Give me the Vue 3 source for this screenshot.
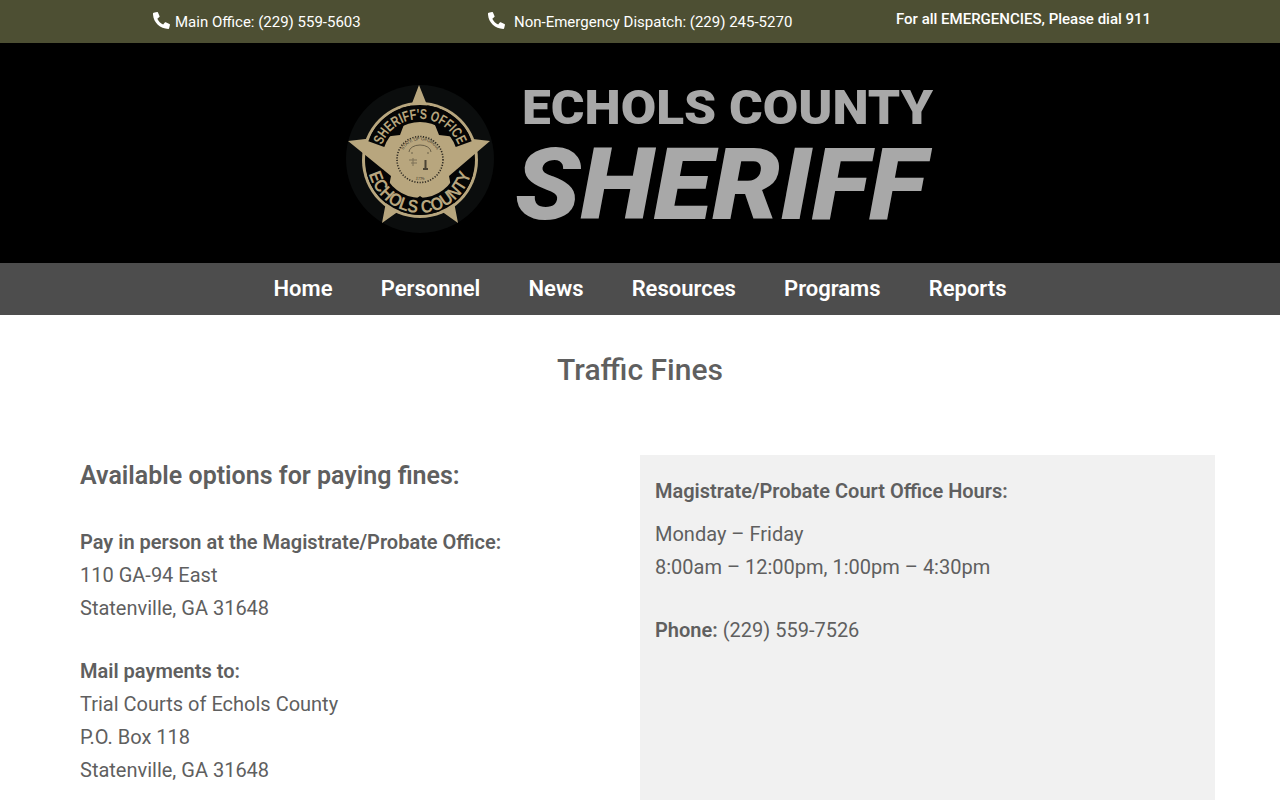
<template>
  <div class="page">
    <div class="topbar">
      <div class="top-item main">
        <svg class="phone" viewBox="0 0 512 512"><path d="M493 24 389 0c-11-3-23 3-27 14l-48 112c-4 10-1 21 7 28l61 50c-36 76-98 139-176 176l-50-61c-7-8-18-11-28-7L16 360C5 365-1 377 2 388l24 104c2 11 12 19 23 19 256 0 464-207 464-464 0-11-8-21-20-23z" transform="matrix(-1 0 0 1 512 0)"/></svg>
        <span>Main Office: (229) 559-5603</span>
      </div>
      <div class="top-item dispatch">
        <svg class="phone" viewBox="0 0 512 512"><path d="M493 24 389 0c-11-3-23 3-27 14l-48 112c-4 10-1 21 7 28l61 50c-36 76-98 139-176 176l-50-61c-7-8-18-11-28-7L16 360C5 365-1 377 2 388l24 104c2 11 12 19 23 19 256 0 464-207 464-464 0-11-8-21-20-23z" transform="matrix(-1 0 0 1 512 0)"/></svg>
        <span>Non-Emergency Dispatch: (229) 245-5270</span>
      </div>
      <div class="top-item emergency">For all EMERGENCIES, Please dial 911</div>
    </div>

    <header class="brand">
      <svg class="logo" viewBox="340 70 600 165" width="600" height="165">
        <defs>
          <path id="arcTop" d="M 379 160 A 41 41 0 0 1 461 160" />
          <path id="arcBottom" d="M 367 160 A 53 53 0 0 0 473 160" />
          <path id="arcSeal" d="M 401 159 A 19 19 0 0 1 439 159" />
          <path id="arcSealLow" d="M 399 159 A 21 21 0 0 0 441 159" />
        </defs>
        <circle cx="420" cy="159" r="74" fill="#0b0d0d" />
        <circle cx="420" cy="160" r="58" fill="#b8a67e" />
        <circle cx="420" cy="160" r="55" fill="#050505" />
        <polygon fill="#b8a67e" points="419,85 439,135 490,141 449,176 458,223 420,196 382,223 391,176 348,141 400,135" />
        <path d="M376.3 144.1A46.5 46.5 0 0 1 463.7 144.1" fill="none" stroke="#050505" stroke-width="17" />
        <path d="M375.1 172A46.5 46.5 0 0 0 464.9 172" fill="none" stroke="#050505" stroke-width="17" />
        <text class="badge-text narrow" font-size="14.5">
          <textPath href="#arcTop" startOffset="50%" text-anchor="middle" textLength="98" lengthAdjust="spacingAndGlyphs">SHERIFF'S OFFICE</textPath>
        </text>
        <text class="badge-text" font-size="18">
          <textPath href="#arcBottom" startOffset="50%" text-anchor="middle" textLength="138" lengthAdjust="spacingAndGlyphs">ECHOLS COUNTY</textPath>
        </text>
        <!-- state seal -->
        <circle cx="420" cy="159.5" r="23" fill="#b8a67e" stroke="#2c2820" stroke-width="1.6" stroke-dasharray="1.2 1.5" />
        <text class="seal-text" font-size="4.2">
          <textPath href="#arcSeal" startOffset="50%" text-anchor="middle">STATE OF GEORGIA</textPath>
        </text>
        <text class="seal-text" font-size="4.2">
          <textPath href="#arcSealLow" startOffset="50%" text-anchor="middle">1776</textPath>
        </text>
        <path d="M409 152a11 7 0 0 1 22 0M412 152v2M428 152v2" fill="none" stroke="#6b6048" stroke-width="1" />
        <path d="M409 160h8M411 163h6M413 158v8" fill="none" stroke="#7d7157" stroke-width="1" />
        <path d="M424.5 160h2v8h1.5v2h-5v-2h1.500z" fill="#4a4334" />
        <text class="county" x="522" y="124" font-size="48" textLength="411" lengthAdjust="spacingAndGlyphs">ECHOLS COUNTY</text>
        <text class="sheriff" x="515" y="219" font-size="100" textLength="411" lengthAdjust="spacingAndGlyphs">SHERIFF</text>
      </svg>
    </header>

    <nav class="nav">
      <a v-for="item in navItems" :key="item">{{ item }}</a>
    </nav>

    <main class="content">
      <h1>Traffic Fines</h1>
      <div class="columns">
        <section class="left">
          <h2>Available options for paying fines:</h2>
          <p>
            <strong>Pay in person at the Magistrate/Probate Office:</strong><br />
            110 GA-94 East<br />
            Statenville, GA 31648
          </p>
          <p>
            <strong>Mail payments to:</strong><br />
            Trial Courts of Echols County<br />
            P.O. Box 118<br />
            Statenville, GA 31648
          </p>
        </section>
        <aside class="hours">
          <h3>Magistrate/Probate Court Office Hours:</h3>
          <p>Monday – Friday<br />8:00am – 12:00pm, 1:00pm – 4:30pm</p>
          <p><strong>Phone:</strong> (229) 559-7526</p>
        </aside>
      </div>
    </main>
  </div>
</template>

<script setup>
const navItems = ['Home', 'Personnel', 'News', 'Resources', 'Programs', 'Reports'];
</script>

<style>
html,
body {
  height: 100%;
  overflow: hidden;
  background: #fff;
}
</style>

<style scoped>
.page {
  font-family: Roboto, "Liberation Sans", sans-serif;
  color: #5f5f5f;
}

.topbar {
  height: 43px;
  background: #4d4f33;
  color: #fff;
  font-size: 15px;
  display: flex;
}

.top-item {
  display: flex;
  align-items: center;
  white-space: nowrap;
}

.main {
  margin-left: 153px;
  width: 335px;
  gap: 5px;
}

.dispatch {
  width: 408px;
  gap: 9px;
}

.emergency {
  font-weight: 500;
  padding-bottom: 6px;
}

.phone {
  width: 17px;
  height: 17px;
  fill: #fff;
  margin-top: -3px;
}

.brand {
  height: 220px;
  background: #000;
  display: flex;
  justify-content: center;
  align-items: flex-start;
  padding-top: 27px;
  box-sizing: border-box;
}

.logo {
  display: block;
  overflow: visible;
}

.badge-text {
  font-family: "Liberation Sans", sans-serif;
  font-weight: 700;
  fill: #b8a67e;
}

.narrow {
  font-family: "Liberation Sans Narrow", "Liberation Sans", sans-serif;
}

.seal-text {
  font-family: "Liberation Sans", sans-serif;
  fill: #3a3428;
}

.county {
  font-family: Roboto, sans-serif;
  font-weight: 900;
  fill: #a8a8a8;
}

.sheriff {
  font-family: Roboto, sans-serif;
  font-weight: 900;
  font-style: italic;
  fill: #a8a8a8;
}

.nav {
  height: 52px;
  background: #4d4d4d;
  display: flex;
  justify-content: center;
  align-items: center;
  gap: 48.2px;
  padding-bottom: 2px;
  box-sizing: border-box;
}

.nav a {
  color: #fff;
  font-size: 22px;
  font-weight: 600;
}

h1 {
  margin: 0;
  padding-top: 36px;
  height: 140px;
  box-sizing: border-box;
  text-align: center;
  font-size: 30px;
  line-height: 37px;
  font-weight: 500;
}

.columns {
  display: flex;
  padding: 0 65px 0 80px;
}

.left {
  width: 560px;
  flex: none;
  font-size: 20px;
  line-height: 33px;
}

h2 {
  margin: 0 0 34px;
  padding-top: 5px;
  font-size: 25px;
  line-height: 32px;
  font-weight: 600;
}

.left p {
  margin: 0 0 30px;
}

strong {
  font-weight: 600;
}

.hours {
  flex: 1;
  background: #f1f1f1;
  padding: 20px 15px 0;
  height: 345px;
  box-sizing: border-box;
  font-size: 20px;
  line-height: 33px;
}

h3 {
  margin: 0 0 10px;
  font-size: 20px;
  line-height: 33px;
  font-weight: 600;
}

.hours p {
  margin: 0 0 30px;
}
</style>
